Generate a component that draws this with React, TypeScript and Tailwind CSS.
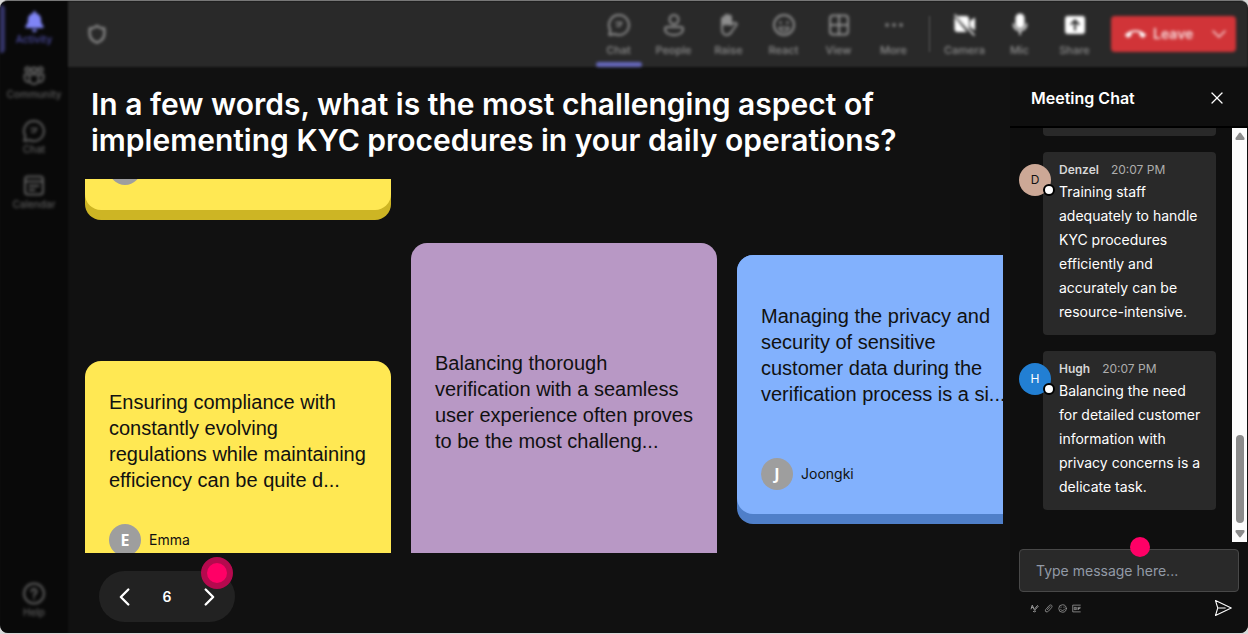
import { useState } from 'react';
import type { ReactNode } from 'react';
import { X } from 'lucide-react';
import { FaBell } from 'react-icons/fa';
import { MdCallEnd } from 'react-icons/md';
import clsx from 'clsx';

interface Message {
  name: string;
  time: string;
  text: string;
  avatar: string;
}

const messages: Message[] = [
  {
    name: 'Denzel',
    time: '20:07 PM',
    text: 'Training staff adequately to handle KYC procedures efficiently and accurately can be resource-intensive.',
    avatar: 'bg-[#cca896] text-[#111]',
  },
  {
    name: 'Hugh',
    time: '20:07 PM',
    text: 'Balancing the need for detailed customer information with privacy concerns is a delicate task.',
    avatar: 'bg-[#227fd3] text-white',
  },
];

function Icon({ children, size = 24 }: { children: ReactNode; size?: number }) {
  return (
    <svg
      width={size}
      height={size}
      viewBox="0 0 24 24"
      fill="none"
      stroke="currentColor"
      strokeWidth="2"
      strokeLinecap="round"
      strokeLinejoin="round"
      aria-hidden="true"
    >
      {children}
    </svg>
  );
}

const ChatIcon = () => (
  <Icon>
    <path d="M12 2a10 10 0 1 1-4.6 18.9L2.3 22l1-5A10 10 0 0 1 12 2Z" />
    <path d="M9 9.5h6M9.5 13h3.5M14.5 9.5 13 13" strokeWidth="1.4" />
  </Icon>
);

const CommunityIcon = () => (
  <Icon>
    <circle cx="12" cy="6" r="2.6" />
    <circle cx="5.5" cy="5.5" r="2.2" />
    <circle cx="18.5" cy="5.5" r="2.2" />
    <path d="M7.5 10.5h9v5a4.5 4.5 0 0 1-9 0zM7 10.5H2.5V14A4 4 0 0 0 7 18M17 10.5h4.5V14a4 4 0 0 1-4.5 4" />
  </Icon>
);

const CalendarIcon = () => (
  <Icon>
    <rect x="3" y="2.5" width="18" height="18" rx="3" />
    <path d="M3 7.5h18M7.5 12h9M7.5 16h5" />
  </Icon>
);

const HelpIcon = () => (
  <Icon>
    <circle cx="12" cy="11.5" r="10" />
    <path d="M9.5 9.5a2.5 2.5 0 1 1 3.7 2.2c-.8.5-1.2 1-1.2 2M12 16.5v.1" />
  </Icon>
);

const PeopleIcon = () => (
  <Icon>
    <circle cx="12" cy="6.5" r="4.5" />
    <path d="M5 14h14a2 2 0 0 1 2 2c0 4-4 6-9 6s-9-2-9-6a2 2 0 0 1 2-2Z" />
  </Icon>
);

const RaiseIcon = () => (
  <Icon>
    <path d="M5 13V6a1.5 1.5 0 0 1 3 0v4-6.5a1.5 1.5 0 0 1 3 0V10 4a1.5 1.5 0 0 1 3 0v8l2.5-2c1.5-.8 4 .5 3 2l-4.500 6c-1.500 3-3 4-5.500 4C6.500 22 5 19 5 16z" />
    <path d="M6.5 6v5M9.5 3v8M12.5 4v7" strokeWidth="3" />
  </Icon>
);

const ReactIcon = () => (
  <Icon>
    <circle cx="12" cy="12" r="10" />
    <path d="M8.5 9.5v.2M15.5 9.5v.2" strokeWidth="2.5" />
    <path d="M7 14.5h10c-1 3-3 4-5 4s-4-1-5-4Z" strokeWidth="1.6" />
  </Icon>
);

const ViewIcon = () => (
  <Icon>
    <rect x="3" y="2.5" width="18" height="19" rx="3" />
    <path d="M12 2.5v19M3 12h18" />
  </Icon>
);

const MoreIcon = () => (
  <Icon>
    <path d="M5 12h.1M12 12h.1M19 12h.1" strokeWidth="3.6" />
  </Icon>
);

const CameraIcon = () => (
  <Icon>
    <path d="M4.5 3H13a3 3 0 0 1 3 3v10.5zM1.5 4v12a3 3 0 0 0 3 3H14zM17 8l5-3.5v13L17 14z" fill="currentColor" stroke="none" />
    <path d="m2 2 19 20" strokeWidth="1.6" />
  </Icon>
);

const MicIcon = () => (
  <Icon>
    <rect x="8.5" y="1.5" width="7" height="13" rx="3.5" fill="currentColor" />
    <path d="M5.5 11a6.5 6.5 0 0 0 13 0M12 18v3.5" strokeWidth="1.6" />
  </Icon>
);

const ShareIcon = () => (
  <svg width="24" height="24" viewBox="0 0 24 24" aria-hidden="true">
    <path
      fill="currentColor"
      fillRule="evenodd"
      d="M4 3h16a3 3 0 0 1 2 3v12a3 3 0 0 1-2 3H4a3 3 0 0 1-2-3V6a3 3 0 0 1 2-3Zm8 3L7 11l1.200 1.200L11 10v7.500h2V10l2.500 2.500L17 11Z"
    />
  </svg>
);

const ShieldIcon = () => (
  <Icon size={22}>
    <path d="M12 3c2 2 4.5 3 8 3v6c0 4.5-3 7.5-8 9.5C7 19.5 4 16.5 4 12V6c3.5 0 6-1 8-3Z" strokeWidth="2.6" />
  </Icon>
);

function NavItem({ label, icon, active }: { label: string; icon: ReactNode; active?: boolean }) {
  return (
    <button
      className={clsx(
        'relative flex h-[55px] w-full flex-col items-center pt-2 text-[10px] leading-3 font-medium blur-[1px]',
        active ? 'text-[#4e4ea6]' : 'text-[#5f5f5f]'
      )}
    >
      {active && <span className="absolute top-1 left-0 h-12 w-[5px] rounded-r bg-[#35356a]" />}
      <span className="flex h-6 items-center">{icon}</span>
      {label}
    </button>
  );
}

function ToolItem({
  label,
  icon,
  active,
  strong,
}: {
  label: string;
  icon: ReactNode;
  active?: boolean;
  strong?: boolean;
}) {
  return (
    <button className="relative flex h-full w-[55px] flex-col items-center pt-3 text-[11px] leading-4 font-medium text-[#8e8e8e] blur-[1px]">
      <span className={clsx('mb-[5px] h-6', strong && 'text-white')}>{icon}</span>
      {label}
      {active && <span className="absolute bottom-0 h-[5px] w-[46px] rounded-full bg-[#6668bc]" />}
    </button>
  );
}

function Author({ name }: { name: string }) {
  return (
    <div className="flex items-center gap-2 text-sm leading-5">
      <span className="flex size-8 items-center justify-center rounded-full bg-[#9e9e9e] font-['Noto_Sans',sans-serif] text-base font-bold text-white">
        {name[0]}
      </span>
      {name}
    </div>
  );
}

function NoteText({ children }: { children: ReactNode }) {
  return <p className="font-['Liberation_Sans',Arial,sans-serif] text-[20px] leading-[26px]">{children}</p>;
}

function ChatMessage({ message }: { message: Message }) {
  return (
    <li className="flex items-start">
      <span
        className={clsx(
          'relative mt-3 -mr-2 flex size-8 shrink-0 items-center justify-center rounded-full text-xs',
          message.avatar
        )}
      >
        {message.name[0]}
        <span className="absolute -right-1 bottom-0 size-3 rounded-full border-2 border-black bg-white" />
      </span>
      <div className="min-w-0 flex-1 rounded bg-[#292929] pt-2 pr-3 pb-[11px] pl-4">
        <div className="flex gap-3 text-xs leading-5">
          <span className="font-semibold text-[#d6d6d6]">{message.name}</span>
          <span className="text-[#adadad]">{message.time}</span>
        </div>
        <p className="text-sm leading-6 text-white">{message.text}</p>
      </div>
    </li>
  );
}

export default function App() {
  const [page, setPage] = useState(6);
  const [draft, setDraft] = useState('');

  return (
    <div className="h-screen bg-[#d8d8d8] pb-px font-[Inter,sans-serif]">
      <div className="flex h-full overflow-hidden rounded-lg border-t border-[#777] bg-[#111]">
        {/* App rail */}
        <nav className="flex w-[68px] shrink-0 flex-col bg-[#090909] pb-1 blur-[1px]">
          <NavItem label="Activity" icon={<FaBell size={21} className="text-[#7f85f5]" />} active />
          <NavItem label="Community" icon={<CommunityIcon />} />
          <NavItem label="Chat" icon={<ChatIcon />} />
          <NavItem label="Calendar" icon={<CalendarIcon />} />
          <div className="mt-auto">
            <NavItem label="Help" icon={<HelpIcon />} />
          </div>
        </nav>

        <div className="flex min-w-0 flex-1 flex-col">
          {/* Meeting toolbar */}
          <header className="flex h-[66px] shrink-0 items-center bg-[#292929] pr-3 pl-[18px] blur-[1px]">
            <span className="text-[#8a8a8a] blur-[1px]">
              <ShieldIcon />
            </span>
            <div className="ml-auto flex h-full">
              <ToolItem label="Chat" icon={<ChatIcon />} active />
              <ToolItem label="People" icon={<PeopleIcon />} />
              <ToolItem label="Raise" icon={<RaiseIcon />} />
              <ToolItem label="React" icon={<ReactIcon />} />
              <ToolItem label="View" icon={<ViewIcon />} />
              <ToolItem label="More" icon={<MoreIcon />} />
            </div>
            <span className="mr-[7px] ml-2 h-9 w-px bg-[#555]" />
            <div className="flex h-full">
              <ToolItem label="Camera" icon={<CameraIcon />} strong />
              <ToolItem label="Mic" icon={<MicIcon />} strong />
              <ToolItem label="Share" icon={<ShareIcon />} strong />
            </div>
            <button className="ml-[9px] flex h-9 w-[125px] items-center rounded bg-[#d13438] pr-2 pl-[14px] text-sm font-semibold text-[#f7dcdd] blur-[1px]">
              <MdCallEnd size={21} className="mr-[7px] text-white" />
              Leave
              <span className="ml-auto">
                <Icon size={18}>
                  <path d="m4 8 8 8 8-8" />
                </Icon>
              </span>
            </button>
          </header>

          <div className="flex min-h-0 flex-1">
            {/* Question board */}
            <main className="flex min-w-0 flex-1 flex-col pr-[7px] pl-[17px]">
              <h1 className="mt-[19px] mb-[21px] pl-[6px] text-[30px] leading-9 font-semibold text-white">
                In a few words, what is the most challenging aspect of
                <br />
                implementing KYC procedures in your daily operations?
              </h1>

              <section className="flex min-h-0 flex-1 gap-5 overflow-hidden text-[#111]">
                <div className="flex w-[306px] shrink-0 flex-col">
                  <article className="h-[41px] shrink-0 overflow-hidden rounded-b-2xl bg-[#cdb524] pb-[10px]">
                    <div className="flex h-full items-start rounded-b-2xl bg-[#ffe853] px-6">
                      <span className="-mt-[26px] size-8 rounded-full bg-[#9e9e9e]" />
                    </div>
                  </article>
                  <article className="mt-[141px] flex-1 rounded-t-2xl bg-[#ffe853] px-6 pt-7">
                    <NoteText>
                      Ensuring compliance with constantly evolving regulations while maintaining efficiency can be
                      quite d...
                    </NoteText>
                    <div className="mt-[31px]">
                      <Author name="Emma" />
                    </div>
                  </article>
                </div>

                <article className="mt-[64px] w-[306px] shrink-0 rounded-t-2xl bg-[#b898c5] px-6 pt-[107px]">
                  <NoteText>
                    Balancing thorough verification with a seamless user experience often proves to be the most
                    challeng...
                  </NoteText>
                </article>

                <article className="mt-[76px] w-[306px] shrink-0 self-start rounded-2xl bg-[#4f7fc9] pb-[10px]">
                  <div className="rounded-2xl bg-[#82b1fd] px-6 pt-12 pb-6">
                    <NoteText>
                      Managing the privacy and security of sensitive customer data during the verification process is
                      a si...
                    </NoteText>
                    <div className="mt-[51px]">
                      <Author name="Joongki" />
                    </div>
                  </div>
                </article>
              </section>

              <footer className="flex pt-[18px] pb-[11px] pl-[14px] text-white">
                <div className="relative flex h-[51px] w-[136px] items-center justify-between rounded-full bg-[#222] px-4 text-sm font-semibold">
                  <button aria-label="Previous page" onClick={() => setPage(Math.max(1, page - 1))}>
                    <Icon size={20}>
                      <path d="m16 3-9 9 9 9" strokeWidth="2.8" />
                    </Icon>
                  </button>
                  {page}
                  <button aria-label="Next page" onClick={() => setPage(page + 1)}>
                    <Icon size={20}>
                      <path d="m8 3 9 9-9 9" strokeWidth="2.8" />
                    </Icon>
                  </button>
                  <span className="absolute -top-[14px] right-[2px] size-8 rounded-full border-[6px] border-[#b5094e] bg-[#ff0066]" />
                </div>
              </footer>
            </main>

            {/* Meeting chat */}
            <aside className="flex w-[238px] shrink-0 flex-col bg-[#0f0f0f]">
              <div className="flex h-[61px] shrink-0 items-center justify-between border-b-2 border-black pt-[2px] pr-[21px] pl-[21px] text-white">
                <h2 className="text-base font-semibold">Meeting Chat</h2>
                <button aria-label="Close chat">
                  <X size={20} strokeWidth={1.5} />
                </button>
              </div>

              <div className="flex min-h-0 flex-1">
                <div className="min-w-0 flex-1 overflow-hidden pr-4 pl-[9px]">
                  <div className="mb-4 ml-6 h-2 rounded-b bg-[#292929]" />
                  <ul className="space-y-4">
                    {messages.map((message) => (
                      <ChatMessage key={message.name} message={message} />
                    ))}
                  </ul>
                </div>
                <div className="mr-px flex w-[15px] flex-col items-center justify-between bg-[#fcfcfc] pt-1 pb-1 text-[#8b8b8b]">
                  <svg width="10" height="8" viewBox="0 0 10 8" fill="currentColor">
                    <path d="M4 1.2Q5 0 6 1.2L9.5 6Q10 8 8.5 8h-7Q0 8 .5 6z" />
                  </svg>
                  <span className="mt-auto mb-[7px] h-[88px] w-2 rounded-full bg-[#8b8b8b]" />
                  <svg width="10" height="8" viewBox="0 0 10 8" fill="currentColor">
                    <path d="M4 6.8Q5 8 6 6.8L9.5 2Q10 0 8.5 0h-7Q0 0 .5 2z" />
                  </svg>
                </div>
              </div>

              <form className="shrink-0 pt-[7px] pr-[9px] pb-4 pl-[9px]" onSubmit={(e) => e.preventDefault()}>
                <div className="relative">
                  <input
                    type="text"
                    aria-label="Message"
                    placeholder="Type message here..."
                    value={draft}
                    onChange={(e) => setDraft(e.target.value)}
                    className="block h-[43px] w-full rounded border border-[#484848] bg-[#292929] px-4 text-sm text-white placeholder:text-[#929aa6]"
                  />
                  <span className="absolute -top-3 left-[111px] size-5 rounded-full bg-[#ff0066]" />
                </div>
                <div className="mt-[7px] flex h-[18px] items-center gap-[5px] pl-[11px] text-[#a3a3a3]">
                  <button type="button" aria-label="Format">
                    <Icon size={9}>
                      <path d="m3 13 3-10 4 10M4 9h5M9 20c4 3 8-1 5-2s-4-3 0-7l6-7 2 2-8 9" strokeWidth="2.4" />
                    </Icon>
                  </button>
                  <button type="button" aria-label="Attach file">
                    <Icon size={9}>
                      <path d="m9 15 7-8M5 20c-3-2-1-5 1-7l8-9c5-4 10 1 6 6l-8 9c-2 2-5 3-7 1Z" />
                    </Icon>
                  </button>
                  <button type="button" aria-label="Emoji">
                    <Icon size={9}>
                      <circle cx="12" cy="12" r="10" />
                      <path d="M8 8v1M16 8v1M7 14c2 5 8 5 10 0" />
                    </Icon>
                  </button>
                  <button type="button" aria-label="GIF">
                    <Icon size={9}>
                      <path d="M22 3H2v18h20M10 9H6v6h4v-3M13 9v6M17 15V9h5M17 12h4" />
                    </Icon>
                  </button>
                  <button type="submit" aria-label="Send" className="mr-[7px] ml-auto text-white">
                    <Icon size={18}>
                      <path d="M2 2 23 12 2 22l3-10zM5 12h10" strokeWidth="1.4" />
                    </Icon>
                  </button>
                </div>
              </form>
            </aside>
          </div>
        </div>
      </div>
    </div>
  );
}
